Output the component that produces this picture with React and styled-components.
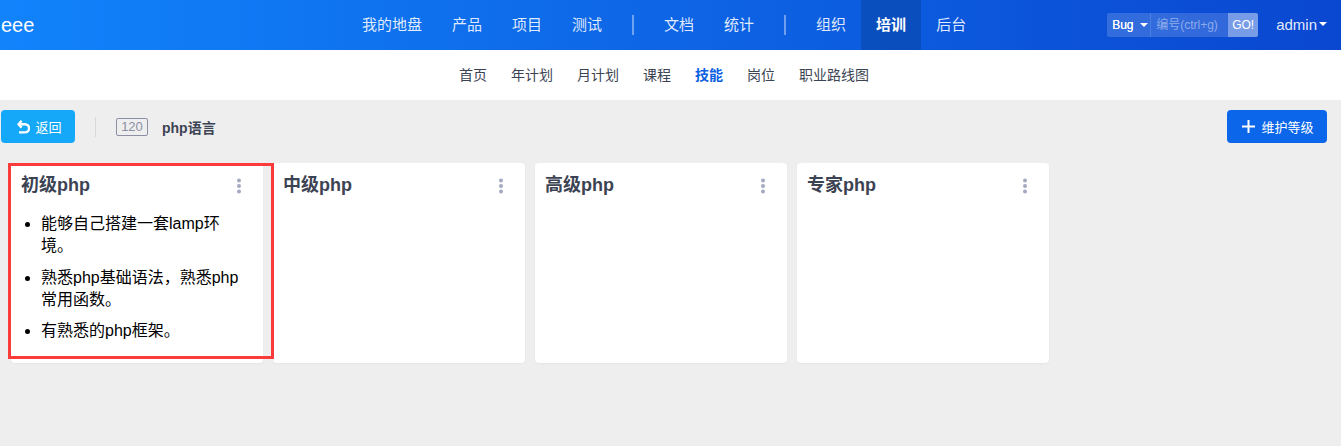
import React from 'react';
import styled, { createGlobalStyle } from 'styled-components';

const Global = createGlobalStyle`
  html, body { margin: 0; padding: 0; background: #eeeeee; }
  body { font-family: "Liberation Sans", "Noto Sans CJK SC", sans-serif; font-size: 13px; color: #3c4353; }
  * { box-sizing: border-box; }
`;

const Page = styled.div`
  position: relative;
  width: 1341px;
  height: 446px;
  overflow: hidden;
  background: #eeeeee;
`;

const Header = styled.header`
  height: 50px;
  display: flex;
  align-items: stretch;
  background: linear-gradient(90deg, #1183fb 0%, #0a47d0 100%);
  color: #fff;
`;

const Brand = styled.div`
  width: 347px;
  padding-left: 1px;
  font-size: 20px;
  line-height: 50px;
`;

const MainNav = styled.nav`
  display: flex;
  align-items: stretch;
`;

const NavItem = styled.a`
  padding: 0 15px;
  font-size: 15px;
  line-height: 50px;
  color: ${p => (p.$active ? '#fff' : 'rgba(255,255,255,.88)')};
  font-weight: ${p => (p.$active ? 700 : 400)};
  background: ${p => (p.$active ? 'rgba(0,0,0,.14)' : 'transparent')};
`;

const NavDivider = styled.span`
  align-self: center;
  width: 2px;
  height: 20px;
  margin: 0 15px;
  background: rgba(255,255,255,.4);
`;

const HeaderRight = styled.div`
  margin-left: auto;
  display: flex;
  align-items: center;
  padding-right: 14px;
`;

const SearchGroup = styled.div`
  display: flex;
  height: 24px;
  width: 151px;
  border-radius: 2px;
  overflow: hidden;
  background: rgba(255,255,255,.16);
`;

const SearchType = styled.div`
  width: 44px;
  display: flex;
  align-items: center;
  padding-left: 5px;
  gap: 6px;
  font-size: 12px;
  font-weight: 500;
  text-shadow: 0 0 .4px #fff;
  border-right: 1px solid rgba(255,255,255,.12);
`;

const SearchInput = styled.div`
  flex: 1;
  padding-left: 5px;
  font-size: 12px;
  line-height: 24px;
  color: rgba(255,255,255,.45);
`;

const GoButton = styled.div`
  width: 30px;
  text-align: center;
  font-size: 12px;
  line-height: 24px;
  background: rgba(255,255,255,.35);
`;

const Caret = styled.span`
  display: inline-block;
  width: 0;
  height: 0;
  margin-left: ${p => (p.$gap ? '2px' : '0')};
  border-left: 4px solid transparent;
  border-right: 4px solid transparent;
  border-top: 4px solid #fff;
`;

const UserMenu = styled.div`
  margin-left: 18px;
  padding-bottom: 2px;
  display: flex;
  align-items: center;
  font-size: 15px;
  color: rgba(255,255,255,.9);
`;

const SubNav = styled.nav`
  height: 50px;
  background: #fff;
  display: flex;
  justify-content: center;
  align-items: center;
  gap: 24px;
  padding: 0 13px 2px 0;
`;

const SubItem = styled.a`
  font-size: 14px;
  color: ${p => (p.$active ? '#0c60e1' : '#3c4353')};
  font-weight: ${p => (p.$active ? 700 : 400)};
`;

const Toolbar = styled.div`
  display: flex;
  align-items: center;
  height: 33px;
  margin-top: 10px;
  padding: 0 14px 0 1px;
`;

const BackButton = styled.button`
  width: 74px;
  height: 33px;
  display: flex;
  align-items: center;
  justify-content: center;
  gap: 5px;
  border: 0;
  border-radius: 4px;
  padding: 0 0 0 3px;
  background: #16a8f8;
  color: #fff;
  font: 400 13px "Liberation Sans", "Noto Sans CJK SC", sans-serif;
`;

const ToolbarDivider = styled.span`
  width: 1px;
  height: 20px;
  margin: 0 20px;
  background: #d8d8d8;
`;

const IdTag = styled.span`
  width: 32px;
  height: 18px;
  border: 1px solid #8c90a6;
  border-radius: 2px;
  font-size: 13px;
  line-height: 16px;
  text-align: center;
  color: #8c90a6;
`;

const PageTitle = styled.strong`
  margin-left: 14px;
  font-size: 14px;
  color: #3c4353;
`;

const PrimaryButton = styled.button`
  margin-left: auto;
  width: 100px;
  height: 33px;
  display: flex;
  align-items: center;
  justify-content: center;
  gap: 6px;
  border: 0;
  border-radius: 4px;
  padding: 0 0 0 2px;
  background: #0c66e9;
  color: #fff;
  font: 400 13px "Liberation Sans", "Noto Sans CJK SC", sans-serif;
`;

const Board = styled.div`
  display: flex;
  gap: 10px;
  padding: 20px 0 0 11px;
`;

const Card = styled.section`
  width: 252px;
  height: 200px;
  background: #fff;
  border-radius: 4px;
  padding: 10px 14px 0 10px;
  box-shadow: 0 1px 2px rgba(0,0,0,.04);
`;

const CardHead = styled.div`
  display: flex;
  align-items: center;
  justify-content: space-between;
  height: 24px;
  padding-right: 7px;
`;

const CardTitle = styled.h3`
  margin: 0;
  font-size: 18px;
  font-weight: 700;
  line-height: 24px;
  color: #3c4353;
`;

const MenuDots = styled.svg`
  margin-top: 2px;
`;

const CardList = styled.ul`
  margin: 16px 0 0;
  padding: 0 0 0 20px;
  color: #000;
  font-size: 16px;
  line-height: 22px;
`;

const CardItem = styled.li`
  margin-bottom: 9.5px;
`;

const Annotation = styled.div`
  position: absolute;
  left: 8px;
  top: 163px;
  width: 266px;
  height: 196px;
  border: 3px solid #fb3a3a;
  pointer-events: none;
`;

const Dots = () => (
  <MenuDots width="6" height="16" viewBox="0 0 6 16" fill="#a3a9c0">
    <circle cx="3" cy="2.5" r="2" />
    <circle cx="3" cy="8" r="2" />
    <circle cx="3" cy="13.5" r="2" />
  </MenuDots>
);

const Undo = () => (
  <svg width="13" height="14" viewBox="0 0 13 14" fill="none" stroke="#fff" strokeWidth="2.4">
    <path d="M4.6 0.8 1.6 4.2 4.6 7.6" />
    <path d="M2 4.2h6a3.9 3.9 0 0 1 0 8.2H2" />
  </svg>
);

const Plus = () => (
  <svg width="13" height="13" viewBox="0 0 13 13" stroke="#fff" strokeWidth="2">
    <path d="M6.5 0v13M0 6.5h13" />
  </svg>
);

const cards = [
  { title: '初级php', items: ['能够自己搭建一套lamp环境。', '熟悉php基础语法，熟悉php常用函数。', '有熟悉的php框架。'] },
  { title: '中级php', items: [] },
  { title: '高级php', items: [] },
  { title: '专家php', items: [] },
];

export default function App() {
  return (
    <Page>
      <Global />
      <Header>
        <Brand>eee</Brand>
        <MainNav>
          <NavItem>我的地盘</NavItem>
          <NavItem>产品</NavItem>
          <NavItem>项目</NavItem>
          <NavItem>测试</NavItem>
          <NavDivider />
          <NavItem>文档</NavItem>
          <NavItem>统计</NavItem>
          <NavDivider />
          <NavItem>组织</NavItem>
          <NavItem $active>培训</NavItem>
          <NavItem>后台</NavItem>
        </MainNav>
        <HeaderRight>
          <SearchGroup>
            <SearchType>Bug <Caret /></SearchType>
            <SearchInput>编号(ctrl+g)</SearchInput>
            <GoButton>GO!</GoButton>
          </SearchGroup>
          <UserMenu>admin<Caret $gap /></UserMenu>
        </HeaderRight>
      </Header>
      <SubNav>
        <SubItem>首页</SubItem>
        <SubItem>年计划</SubItem>
        <SubItem>月计划</SubItem>
        <SubItem>课程</SubItem>
        <SubItem $active>技能</SubItem>
        <SubItem>岗位</SubItem>
        <SubItem>职业路线图</SubItem>
      </SubNav>
      <Toolbar>
        <BackButton><Undo />返回</BackButton>
        <ToolbarDivider />
        <IdTag>120</IdTag>
        <PageTitle>php语言</PageTitle>
        <PrimaryButton><Plus />维护等级</PrimaryButton>
      </Toolbar>
      <Board>
        {cards.map(card => (
          <Card key={card.title}>
            <CardHead>
              <CardTitle>{card.title}</CardTitle>
              <Dots />
            </CardHead>
            {card.items.length > 0 && (
              <CardList>
                {card.items.map(item => <CardItem key={item}>{item}</CardItem>)}
              </CardList>
            )}
          </Card>
        ))}
      </Board>
      <Annotation />
    </Page>
  );
}
